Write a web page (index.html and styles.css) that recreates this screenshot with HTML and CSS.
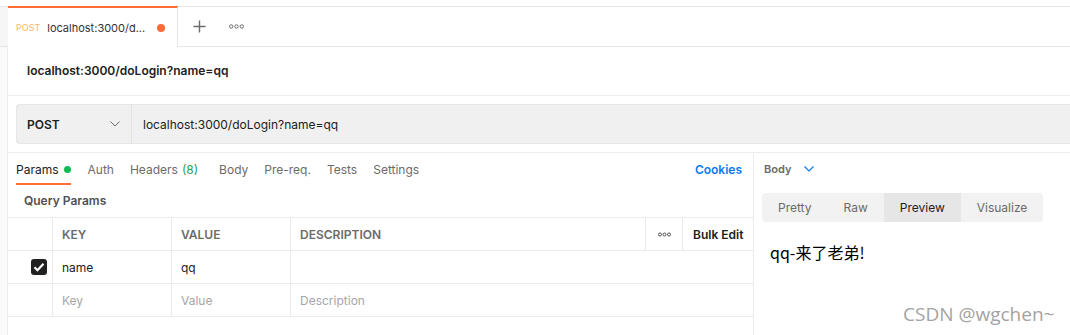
FILE: index.html
```html
<!DOCTYPE html>
<html lang="zh-CN">
<head>
    <meta charset="UTF-8">
    <title>Postman - localhost:3000/doLogin</title>
    <link rel="stylesheet" href="styles.css">
</head>
<body>
    <div class="tabbar">
        <div class="rail-top"></div>
        <div class="tab">
            <span class="tab-method">POST</span>
            <span class="tab-title">localhost:3000/d...</span>
            <span class="tab-dot"></span>
        </div>
        <div class="tab-action">
            <svg width="13" height="13" viewBox="0 0 13 13"><path d="M6.5 0.5v12M0.5 6.5h12" stroke="#6b6b6b" stroke-width="1.4" fill="none"/></svg>
        </div>
        <div class="tab-action dots">
            <svg width="15" height="5" viewBox="0 0 15 5"><circle cx="2.2" cy="2.5" r="1.7"/><circle cx="7.5" cy="2.5" r="1.7"/><circle cx="12.8" cy="2.5" r="1.7"/></svg>
        </div>
    </div>
    <div class="layout">
        <div class="rail"></div>
        <div class="main">
            <div class="req-name">localhost:3000/doLogin?name=qq</div>
            <div class="url-row">
                <div class="url-bar">
                    <div class="method">
                        <span>POST</span>
                        <svg width="10" height="6" viewBox="0 0 10 6"><path d="M0.5 0.5l4.5 4.5 4.5-4.5" stroke="#6b6b6b" stroke-width="1" fill="none"/></svg>
                    </div>
                    <div class="url">localhost:3000/doLogin?name=qq</div>
                </div>
            </div>
            <div class="split">
                <div class="params">
                    <div class="req-tabs">
                        <div class="req-tab active">Params <span class="green-dot"></span></div>
                        <div class="req-tab">Auth</div>
                        <div class="req-tab headers">Headers <span class="count">(8)</span></div>
                        <div class="req-tab">Body</div>
                        <div class="req-tab">Pre-req.</div>
                        <div class="req-tab">Tests</div>
                        <div class="req-tab">Settings</div>
                        <div class="cookies">Cookies</div>
                    </div>
                    <div class="section-title">Query Params</div>
                    <div class="table">
                        <div class="row head">
                            <div class="cell"></div>
                            <div class="cell">KEY</div>
                            <div class="cell">VALUE</div>
                            <div class="cell">DESCRIPTION</div>
                            <div class="cell more">
                                <svg width="13" height="5" viewBox="0 0 13 5"><circle cx="2" cy="2.5" r="1.5"/><circle cx="6.5" cy="2.5" r="1.5"/><circle cx="11" cy="2.5" r="1.5"/></svg>
                            </div>
                            <div class="cell bulk">Bulk Edit</div>
                        </div>
                        <div class="row">
                            <div class="cell check-cell">
                                <span class="checkbox">
                                    <svg width="12" height="10" viewBox="0 0 12 10"><path d="M1.5 5.2l3 3 6-6.5" stroke="#fff" stroke-width="2.2" fill="none"/></svg>
                                </span>
                            </div>
                            <div class="cell">name</div>
                            <div class="cell">qq</div>
                            <div class="cell wide"></div>
                        </div>
                        <div class="row placeholder">
                            <div class="cell"></div>
                            <div class="cell">Key</div>
                            <div class="cell">Value</div>
                            <div class="cell wide">Description</div>
                        </div>
                    </div>
                </div>
                <div class="response">
                    <div class="resp-head">
                        <span>Body</span>
                        <svg width="10" height="6" viewBox="0 0 10 6"><path d="M0.5 0.5l4.5 4.5 4.5-4.5" stroke="#097bed" stroke-width="1.2" fill="none"/></svg>
                    </div>
                    <div class="segments">
                        <div class="segment">Pretty</div>
                        <div class="segment">Raw</div>
                        <div class="segment selected">Preview</div>
                        <div class="segment">Visualize</div>
                    </div>
                    <div class="preview">qq-来了老弟!</div>
                    <div class="watermark">CSDN @wgchen~</div>
                </div>
            </div>
        </div>
    </div>
</body>
</html>
```

FILE: styles.css
```css
body {
    margin: 0;
    padding: 6px 0 0 0;
    font-family: Inter, "Noto Sans", sans-serif;
    font-size: 12px;
    color: #212121;
    background-color: #fff;
    width: 1070px;
    height: 329px;
    overflow: hidden;
}
.tabbar {
    display: flex;
    height: 39px;
    border-top: 1px solid #e6e6e6;
    border-bottom: 1px solid #e6e6e6;
}
.rail-top {
    width: 8px;
    background-color: #f6f6f6;
}
.tab {
    display: flex;
    align-items: center;
    width: 161px;
    margin-top: -1px;
    margin-bottom: -1px;
    padding-left: 8px;
    border-top: 2px solid #ff6c37;
    border-right: 1px solid #e6e6e6;
    background-color: #fff;
}
.tab-method {
    font-size: 9px;
    color: #f8b865;
    margin-right: 7px;
}
.tab-title {
    font-size: 11px;
    color: #333;
}
.tab-dot {
    flex-shrink: 0;
    width: 8px;
    height: 8px;
    border-radius: 50%;
    background-color: #ff6c37;
    margin-left: 12px;
}
.tab-action {
    display: flex;
    align-items: center;
    padding-left: 15px;
}
.tab-action.dots {
    padding-left: 23px;
}
.tab-action.dots svg {
    fill: none;
    stroke: #6b6b6b;
    stroke-width: 1;
}
.layout {
    display: flex;
    height: 289px;
}
.rail {
    width: 7px;
    background-color: #fafafa;
    border-right: 1px solid #ebebeb;
}
.main {
    flex: 1;
    display: flex;
    flex-direction: column;
}
.req-name {
    height: 48px;
    line-height: 47px;
    padding-left: 19px;
    font-weight: 600;
    border-bottom: 1px solid #ededed;
}
.url-row {
    padding: 8px 0 8px 8px;
    border-bottom: 1px solid #ededed;
}
.url-bar {
    display: flex;
    height: 38px;
    border: 1px solid #e6e6e6;
    border-right: none;
    border-radius: 4px 0 0 4px;
    background-color: #f0f0f0;
}
.method {
    display: flex;
    align-items: center;
    justify-content: space-between;
    width: 93px;
    padding: 0 11px 0 10px;
    border-right: 1px solid #e3e3e3;
    font-weight: 600;
}
.url {
    display: flex;
    align-items: center;
    padding-left: 11px;
}
.split {
    flex: 1;
    display: flex;
}
.params {
    width: 745px;
    border-right: 1px solid #ebebeb;
}
.req-tabs {
    display: flex;
    align-items: center;
    height: 32px;
    padding: 0 11px 0 8px;
}
.req-tab {
    display: flex;
    align-items: center;
    height: 32px;
    margin-right: 16px;
    color: #6b6b6b;
    box-sizing: border-box;
}
.req-tab.active {
    color: #212121;
    border-bottom: 2px solid #ff6c37;
    padding-top: 2px;
    margin-right: 17px;
}
.req-tab.headers {
    margin-right: 21px;
}
.green-dot {
    width: 7px;
    height: 7px;
    border-radius: 50%;
    background-color: #0cbb52;
    margin-left: 5px;
}
.count {
    color: #1e9e5e;
    margin-left: 4px;
}
.cookies {
    margin-left: auto;
    color: #097bed;
    font-weight: 600;
}
.section-title {
    height: 32px;
    line-height: 32px;
    padding-left: 16px;
    font-weight: 600;
    color: #505050;
}
.table {
    border-top: 1px solid #ebebeb;
}
.row {
    display: grid;
    grid-template-columns: 44px 119px 119px 355px 37px 1fr;
    height: 32px;
    border-bottom: 1px solid #ebebeb;
}
.row .cell {
    display: flex;
    align-items: center;
    padding-left: 9px;
    border-left: 1px solid #ebebeb;
    overflow: hidden;
}
.row .cell:first-child {
    border-left: none;
}
.row .cell.wide {
    grid-column: span 3;
}
.head .cell {
    font-size: 12px;
    font-weight: 600;
    color: #6b6b6b;
}
.head .more {
    padding-left: 12px;
}
.head .more svg {
    fill: none;
    stroke: #505050;
    stroke-width: 1;
}
.head .bulk {
    padding-left: 10px;
    color: #212121;
}
.check-cell {
    justify-content: flex-end;
    padding-right: 5px;
}
.checkbox {
    display: flex;
    align-items: center;
    justify-content: center;
    width: 16px;
    height: 16px;
    border-radius: 3px;
    background-color: #212121;
}
.placeholder .cell {
    color: #a6a6a6;
}
.response {
    flex: 1;
    position: relative;
}
.resp-head {
    display: flex;
    align-items: center;
    gap: 13px;
    height: 32px;
    padding-left: 10px;
    font-size: 11px;
    font-weight: 600;
    color: #6b6b6b;
}
.segments {
    display: flex;
    width: 281px;
    height: 29px;
    margin: 8px 0 0 8px;
    border-radius: 4px;
    background-color: #f2f2f2;
    overflow: hidden;
}
.segment {
    display: flex;
    align-items: center;
    padding: 0 16px;
    color: #6b6b6b;
}
.segment.selected {
    background-color: #e6e6e6;
    color: #212121;
}
.preview {
    margin: 18px 0 0 16px;
    font-family: "Noto Sans CJK SC", "Noto Sans", sans-serif;
    font-size: 16px;
    color: #000;
}
.watermark {
    position: absolute;
    left: 149px;
    top: 148px;
    font-family: "Open Sans", "Noto Sans", sans-serif;
    font-size: 19px;
    color: #a3a3a3;
}
```
